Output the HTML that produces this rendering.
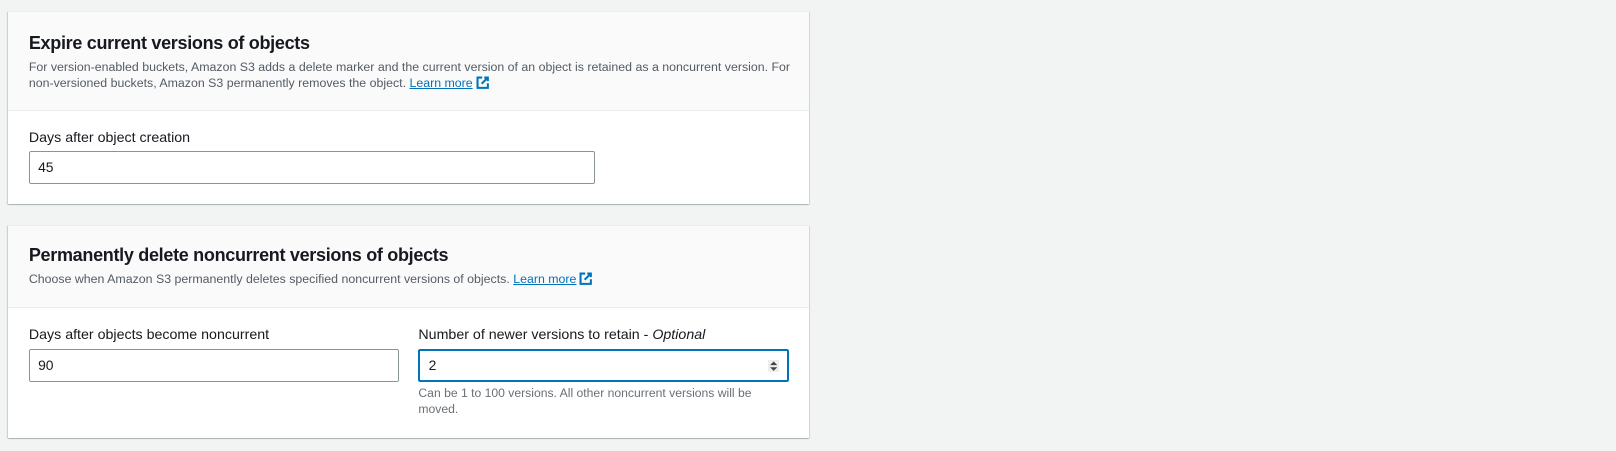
<!DOCTYPE html><html><head><style>
body{margin:0;background:#f2f3f3;font-family:"Liberation Sans",sans-serif;color:#16191f;width:1616px;height:451px;position:relative;overflow:hidden}
#w{zoom:1.0306;position:relative;width:1568px;height:438px}
.card{position:absolute;left:8px;width:777px;background:#fff;box-shadow:0 1px 1px 0 rgba(0,28,36,.3),1px 1px 1px 0 rgba(0,28,36,.15),-1px 1px 1px 0 rgba(0,28,36,.15);border-top:1px solid #eaeded}
.hd{background:#fafafa;border-bottom:1px solid #eaeded;padding:0 20px;position:relative}
h2{margin:0;font-size:17.5px;font-weight:bold;letter-spacing:-.3px;position:absolute;left:20px}
.d{position:absolute;left:20px;font-size:12px;line-height:16px;color:#545b64;width:745px}
a{color:#0073bb;text-decoration:underline}
.lbl{position:absolute;font-size:13.8px;color:#16191f}
.in{position:absolute;height:29px;border:1px solid #879596;border-radius:2px;box-sizing:border-box;font-size:13.5px;padding:0 8px;line-height:29px}
.ic{display:inline-block;vertical-align:-2px;margin-left:3px}
</style></head><body><div id="w">
<div class="card" style="top:11px;height:186px">
<div class="hd" style="height:95px">
<h2 style="top:20px">Expire current versions of objects</h2>
<div class="d" style="top:45px">For version-enabled buckets, Amazon S3 adds a delete marker and the current version of an object is retained as a noncurrent version. For non-versioned buckets, Amazon S3 permanently removes the object. <a>Learn more</a><svg class="ic" width="13" height="13" viewBox="0 0 13 13"><path d="M6 1.5H1.5v10h10V7" fill="none" stroke="#0073bb" stroke-width="2"/><path d="M8 1.5h3.5V5M11.5 1.5 5.5 7.5" fill="none" stroke="#0073bb" stroke-width="2"/></svg></div>
</div>
<div class="lbl" style="left:20px;top:114px">Days after object creation</div>
<div class="in" style="left:20px;top:135px;width:549px;height:32px;line-height:30px">45</div>
</div>
<div class="card" style="top:218px;height:206px">
<div class="hd" style="height:79px">
<h2 style="top:19px">Permanently delete noncurrent versions of objects</h2>
<div class="d" style="top:44px">Choose when Amazon S3 permanently deletes specified noncurrent versions of objects. <a>Learn more</a><svg class="ic" width="13" height="13" viewBox="0 0 13 13"><path d="M6 1.5H1.5v10h10V7" fill="none" stroke="#0073bb" stroke-width="2"/><path d="M8 1.5h3.5V5M11.5 1.5 5.5 7.5" fill="none" stroke="#0073bb" stroke-width="2"/></svg></div>
</div>
<div class="lbl" style="left:20px;top:98px">Days after objects become noncurrent</div>
<div class="in" style="left:20px;top:120px;width:359px;height:32px;line-height:30px">90</div>
<div class="lbl" style="left:398px;top:98px">Number of newer versions to retain - <i>Optional</i></div>
<div class="in" style="left:398px;top:120px;width:360px;height:32px;line-height:28px;border:2px solid #0073bb">2<svg style="position:absolute;right:8px;top:8px" width="11" height="12"><rect width="11" height="12" fill="#eee"/><path d="M2 5 5.5 1.5 9 5ZM2 7 5.5 10.5 9 7Z" fill="#444"/></svg></div>
<div class="d" style="left:398px;top:156px;width:345px;color:#687078;font-size:11.8px;line-height:15px">Can be 1 to 100 versions. All other noncurrent versions will be moved.</div>
</div>
</div></body></html>
